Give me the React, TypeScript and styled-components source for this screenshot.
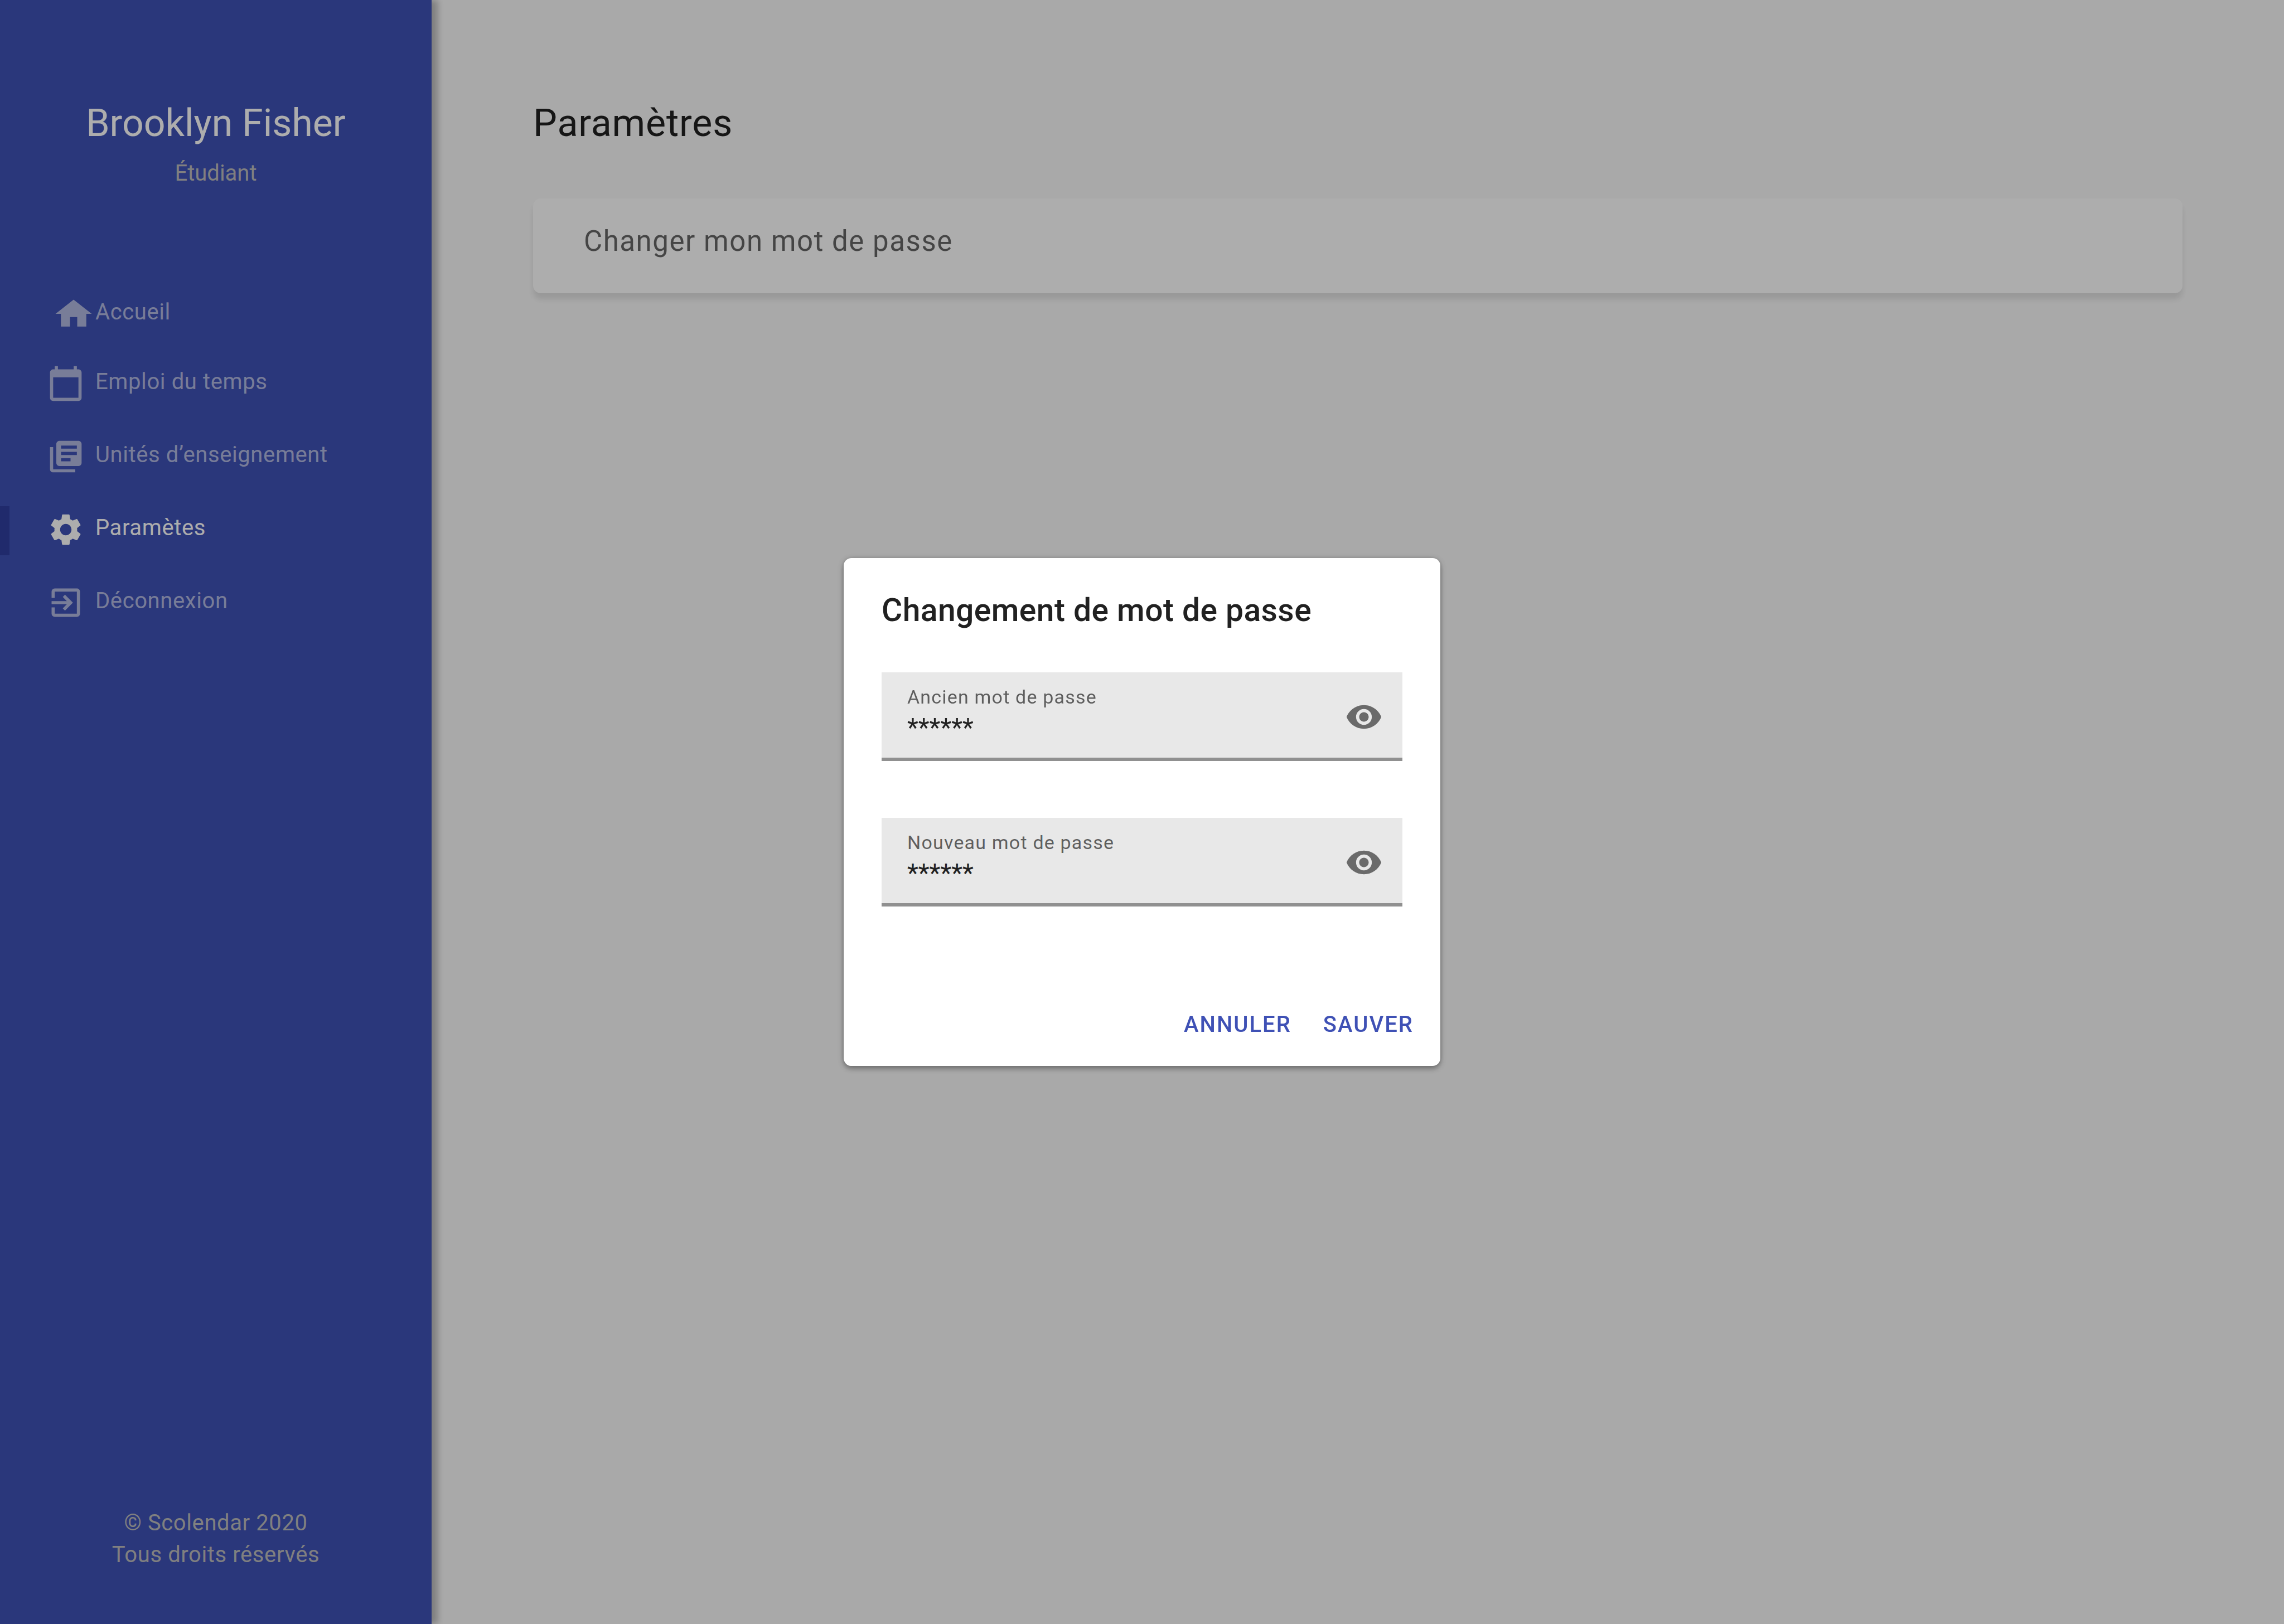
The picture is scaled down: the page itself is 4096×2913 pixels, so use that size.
import React, { useState } from "react";
import styled, { createGlobalStyle } from "styled-components";
import {
  MdCalendarToday,
  MdExitToApp,
  MdHome,
  MdLibraryBooks,
  MdSettings,
  MdVisibility,
} from "react-icons/md";

const GlobalStyle = createGlobalStyle`
  *, *::before, *::after {
    box-sizing: border-box;
  }
  body {
    margin: 0;
    background: #fafafa;
    font-family: Roboto, "Noto Sans", sans-serif;
  }
  h1, h2, p, ul {
    margin: 0;
    padding: 0;
  }
  button, input {
    margin: 0;
    border: 0;
    font-family: inherit;
  }
`;

const Page = styled.div`
  display: flex;
  min-height: 100vh;
`;

const Sidebar = styled.aside`
  display: flex;
  flex-direction: column;
  flex: none;
  width: 774px;
  padding: 181px 0 96px;
  background: #3f51b5;
  box-shadow: 11px 0 11px rgba(0, 0, 0, 0.25);
`;

const Profile = styled.header`
  display: flex;
  flex-direction: column;
  gap: 21px;
  margin-bottom: 182px;
  text-align: center;
`;

const UserName = styled.p`
  color: #ffffff;
  font-size: 68px;
  line-height: 80px;
`;

const SmallText = styled.p<{ $spaced?: boolean }>`
  color: #bdbdbd;
  font-size: 40px;
  line-height: 57px;
  letter-spacing: ${(p) => (p.$spaced ? "0.015em" : "normal")};
`;

const NavList = styled.ul`
  list-style: none;
`;

const NavItem = styled.li`
  & + & {
    margin-top: 43px;
  }
  &:first-child + & {
    margin-top: 37px;
  }
`;

const NavLink = styled.a<{ $active: boolean }>`
  display: flex;
  align-items: flex-start;
  padding: 8px 0 12px 67px;
  border-left: 17px solid ${(p) => (p.$active ? "#303f9f" : "transparent")};
  color: ${(p) => (p.$active ? "#ffffff" : "rgba(255, 255, 255, 0.6)")};
  font-size: 40px;
  line-height: 62px;
  letter-spacing: 0.015em;
  text-decoration: none;
`;

const IconSlot = styled.span<{ $wide: boolean }>`
  display: flex;
  justify-content: ${(p) => (p.$wide ? "flex-end" : "flex-start")};
  width: 87px;

  svg {
    width: ${(p) => (p.$wide ? "78px" : "68px")};
    height: 68px;
  }
`;

const Footer = styled.footer`
  margin-top: auto;
  text-align: center;
`;

const Main = styled.main`
  flex: 1;
  min-width: 0;
  padding: 181px 182px;
`;

const PageTitle = styled.h1`
  margin-bottom: 95px;
  color: #212121;
  font-size: 68px;
  font-weight: 400;
  line-height: 80px;
  letter-spacing: 0.0125em;
`;

const SettingCard = styled.button`
  display: block;
  width: 100%;
  padding: 41px 91px 57px;
  border-radius: 14px;
  background: #ffffff;
  box-shadow: 0 11px 11px rgba(0, 0, 0, 0.1);
  color: rgba(0, 0, 0, 0.6);
  font-size: 51px;
  line-height: 72px;
  letter-spacing: 0.03em;
  text-align: left;
`;

const Scrim = styled.div`
  position: fixed;
  inset: 0;
  display: flex;
  align-items: center;
  justify-content: center;
  background: rgba(0, 0, 0, 0.32);
`;

const Dialog = styled.form`
  width: 1070px;
  max-width: 100%;
  padding: 61px 24px 24px;
  border-radius: 14px;
  background: #ffffff;
  box-shadow:
    0 0 6px rgba(0, 0, 0, 0.14),
    0 6px 8px rgba(0, 0, 0, 0.16),
    0 3px 14px rgba(0, 0, 0, 0.24);
`;

const DialogBody = styled.div`
  padding: 0 44px;
`;

const DialogTitle = styled.h2`
  margin-bottom: 78px;
  color: #212121;
  font-size: 57px;
  font-weight: 500;
  line-height: 66px;
  letter-spacing: 0.0075em;
`;

const Fields = styled.div`
  display: grid;
  gap: 102px;
`;

const FieldBox = styled.div`
  display: flex;
  align-items: center;
  background: #e8e8e8;
  box-shadow: inset 0 -6px #909090;
`;

const FieldText = styled.div`
  display: flex;
  flex: 1;
  flex-direction: column;
  padding: 22px 0 28px 46px;
`;

const FieldLabel = styled.label`
  color: rgba(0, 0, 0, 0.6);
  font-size: 34px;
  line-height: 45px;
  letter-spacing: 0.035em;
`;

const FieldInput = styled.input`
  width: 100%;
  height: 64px;
  padding: 0;
  outline: none;
  background: transparent;
  color: #212121;
  font-size: 46px;
  line-height: 64px;
`;

const RevealButton = styled.button`
  display: flex;
  margin-right: 35px;
  padding: 0;
  background: transparent;
  color: rgba(0, 0, 0, 0.54);

  svg {
    width: 68px;
    height: 68px;
  }
`;

const Actions = styled.div`
  display: flex;
  justify-content: flex-end;
  gap: 9px;
  margin-top: 161px;
`;

const TextButton = styled.button`
  padding: 22px 24px;
  background: transparent;
  color: #3f51b5;
  font-size: 40px;
  font-weight: 500;
  line-height: 57px;
  letter-spacing: 0.05em;
  text-transform: uppercase;
`;

const links = [
  { label: "Accueil", Icon: MdHome, wide: true },
  { label: "Emploi du temps", Icon: MdCalendarToday },
  { label: "Unités d’enseignement", Icon: MdLibraryBooks },
  { label: "Paramètes", Icon: MdSettings, active: true },
  { label: "Déconnexion", Icon: MdExitToApp },
];

function PasswordField({ id, label }: { id: string; label: string }) {
  const [value, setValue] = useState("******");
  return (
    <FieldBox>
      <FieldText>
        <FieldLabel htmlFor={id}>{label}</FieldLabel>
        <FieldInput
          id={id}
          type="text"
          autoComplete="off"
          value={value}
          onChange={(e) => setValue(e.target.value)}
        />
      </FieldText>
      <RevealButton type="button" aria-label="Afficher">
        <MdVisibility />
      </RevealButton>
    </FieldBox>
  );
}

export default function App() {
  return (
    <>
      <GlobalStyle />
      <Page>
        <Sidebar>
          <Profile>
            <UserName>Brooklyn Fisher</UserName>
            <SmallText>Étudiant</SmallText>
          </Profile>
          <nav>
            <NavList>
              {links.map(({ label, Icon, wide, active }) => (
                <NavItem key={label}>
                  <NavLink href="#" $active={!!active} aria-current={active ? "page" : undefined}>
                    <IconSlot $wide={!!wide}>
                      <Icon preserveAspectRatio="none" aria-hidden />
                    </IconSlot>
                    {label}
                  </NavLink>
                </NavItem>
              ))}
            </NavList>
          </nav>
          <Footer>
            <SmallText $spaced>© Scolendar 2020</SmallText>
            <SmallText $spaced>Tous droits réservés</SmallText>
          </Footer>
        </Sidebar>
        <Main>
          <PageTitle>Paramètres</PageTitle>
          <SettingCard type="button">Changer mon mot de passe</SettingCard>
        </Main>
      </Page>
      <Scrim>
        <Dialog
          role="dialog"
          aria-modal="true"
          aria-labelledby="dialog-title"
          onSubmit={(e) => e.preventDefault()}
        >
          <DialogBody>
            <DialogTitle id="dialog-title">Changement de mot de passe</DialogTitle>
            <Fields>
              <PasswordField id="old-password" label="Ancien mot de passe" />
              <PasswordField id="new-password" label="Nouveau mot de passe" />
            </Fields>
          </DialogBody>
          <Actions>
            <TextButton type="button">Annuler</TextButton>
            <TextButton type="submit">Sauver</TextButton>
          </Actions>
        </Dialog>
      </Scrim>
    </>
  );
}
